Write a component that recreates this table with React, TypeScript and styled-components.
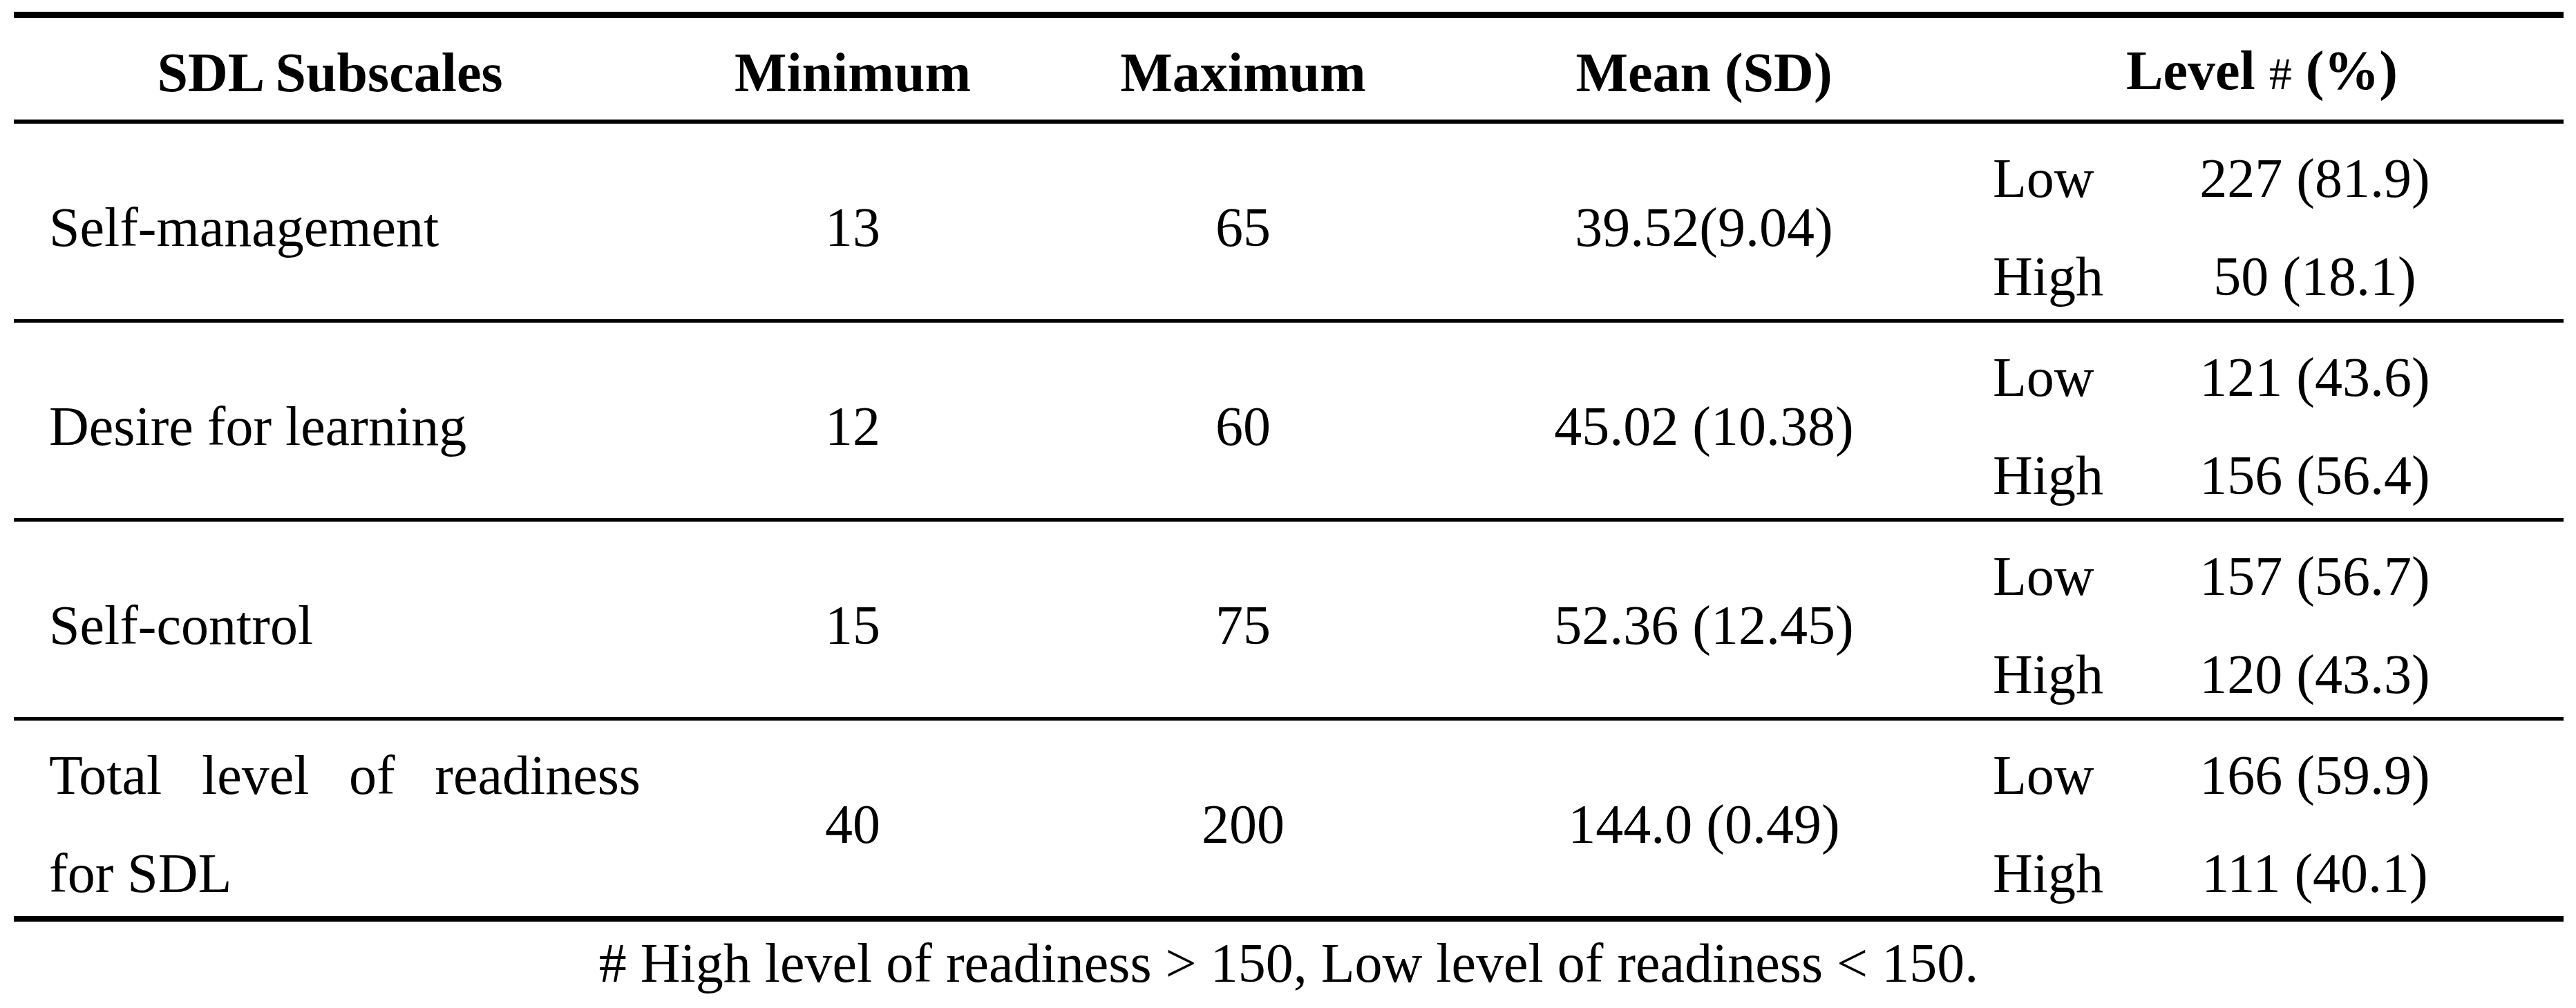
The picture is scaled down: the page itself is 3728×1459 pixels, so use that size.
import React from "react";
import styled, { createGlobalStyle } from "styled-components";

const GlobalStyle = createGlobalStyle`
  * {
    box-sizing: border-box;
  }
  body {
    margin: 0;
    background: #ffffff;
    color: #000000;
    font-family: "Liberation Serif", "Times New Roman", serif;
  }
`;

const columns = "915px 598px 532px 802px 843px";

type Level = { label: string; value: string };

type Subscale = {
  name: string[];
  min: string;
  max: string;
  mean: string;
  levels: Level[];
};

const rows: Subscale[] = [
  {
    name: ["Self-management"],
    min: "13",
    max: "65",
    mean: "39.52(9.04)",
    levels: [
      { label: "Low", value: "227 (81.9)" },
      { label: "High", value: "50 (18.1)" },
    ],
  },
  {
    name: ["Desire for learning"],
    min: "12",
    max: "60",
    mean: "45.02 (10.38)",
    levels: [
      { label: "Low", value: "121 (43.6)" },
      { label: "High", value: "156 (56.4)" },
    ],
  },
  {
    name: ["Self-control"],
    min: "15",
    max: "75",
    mean: "52.36 (12.45)",
    levels: [
      { label: "Low", value: "157 (56.7)" },
      { label: "High", value: "120 (43.3)" },
    ],
  },
  {
    name: ["Total level of readiness", "for SDL"],
    min: "40",
    max: "200",
    mean: "144.0 (0.49)",
    levels: [
      { label: "Low", value: "166 (59.9)" },
      { label: "High", value: "111 (40.1)" },
    ],
  },
];

const App = () => {
  return (
    <>
      <GlobalStyle />
      <Page>
        <Table>
          <HeaderRow>
            <HeadCell>SDL Subscales</HeadCell>
            <HeadCell>Minimum</HeadCell>
            <HeadCell>Maximum</HeadCell>
            <HeadCell>Mean (SD)</HeadCell>
            <HeadCell $shift>
              Level <Hash>#</Hash> (%)
            </HeadCell>
          </HeaderRow>
          {rows.map((row) => (
            <Row key={row.name.join(" ")}>
              <NameCell>
                {row.name.map((line, i) => (
                  <NameLine key={line} $justify={row.name.length > 1 && i === 0}>
                    {line}
                  </NameLine>
                ))}
              </NameCell>
              <Cell>{row.min}</Cell>
              <Cell>{row.max}</Cell>
              <Cell>{row.mean}</Cell>
              <LevelCell>
                {row.levels.map((lv) => (
                  <React.Fragment key={lv.label}>
                    <LevelLabel>{lv.label}</LevelLabel>
                    <LevelValue>{lv.value}</LevelValue>
                  </React.Fragment>
                ))}
              </LevelCell>
            </Row>
          ))}
        </Table>
        <Footnote># High level of readiness &gt; 150, Low level of readiness &lt; 150.</Footnote>
      </Page>
    </>
  );
};

const Page = styled.div`
  padding: 17px 18px 0 20px;
  width: 3728px;
`;

const Table = styled.div`
  width: 3690px;
  border-top: 9px solid #000;
  border-bottom: 8px solid #000;
`;

const HeaderRow = styled.div`
  display: grid;
  grid-template-columns: ${columns};
  align-items: center;
  height: 153px;
  padding-top: 5px;
  border-bottom: 6px solid #000;
`;

const HeadCell = styled.div<{ $shift?: boolean }>`
  font-size: 80px;
  font-weight: 700;
  line-height: 142px;
  text-align: center;
  padding-right: ${(p) => (p.$shift ? "30px" : "0")};
`;

const Hash = styled.span`
  font-weight: 400;
  font-size: 66px;
`;

const Row = styled.div`
  display: grid;
  grid-template-columns: ${columns};
  align-items: center;
  height: 288px;
  padding-top: 8px;
  border-bottom: 5px solid #000;

  &:last-child {
    border-bottom: none;
    height: 283px;
  }
`;

const Cell = styled.div`
  font-size: 80px;
  line-height: 142px;
  text-align: center;
  white-space: nowrap;
`;

const NameCell = styled.div`
  font-size: 80px;
  line-height: 142px;
  padding: 0 8px 0 51px;
`;

const NameLine = styled.span<{ $justify?: boolean }>`
  display: block;
  text-align: ${(p) => (p.$justify ? "justify" : "left")};
  text-align-last: ${(p) => (p.$justify ? "justify" : "left")};
`;

const LevelCell = styled.div`
  display: grid;
  grid-template-columns: 266px 400px;
  padding: 0 160px 0 17px;
  font-size: 80px;
  line-height: 142px;
`;

const LevelLabel = styled.span`
  text-align: left;
`;

const LevelValue = styled.span`
  text-align: center;
  white-space: nowrap;
`;

const Footnote = styled.p`
  margin: 0;
  padding-top: 10px;
  font-size: 80px;
  line-height: 100px;
  text-align: center;
`;

export default App;
